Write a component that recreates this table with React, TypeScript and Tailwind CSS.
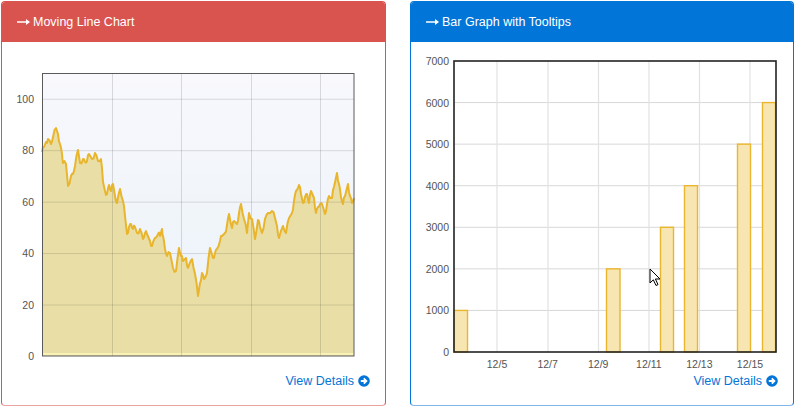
import React from "react";

// traced points of the moving line, in page pixels
const trace: [number, number][] = [
  [42, 151], [44, 146], [46, 141], [48, 138], [51, 143], [53, 136], [56, 127], [58, 133], [60, 143], [62, 153],
  [63, 162], [66, 163], [68, 185], [71, 175], [73, 173], [75, 165], [78, 149], [80, 162], [83, 158], [85, 161],
  [87, 160], [89, 153], [92, 158], [95, 152], [98, 160], [101, 158], [103, 181], [105, 190], [107, 193], [109, 184],
  [111, 190], [113, 183], [115, 195], [117, 202], [120, 188], [123, 200], [125, 215], [127, 233], [129, 226], [131, 223],
  [133, 228], [135, 226], [137, 232], [140, 228], [143, 238], [145, 232], [147, 233], [150, 240], [152, 245], [155, 237],
  [158, 233], [160, 235], [162, 228], [163, 235], [165, 248], [167, 255], [170, 252], [173, 267], [176, 270], [179, 247],
  [181, 255], [183, 260], [186, 257], [188, 267], [192, 258], [195, 273], [198, 295], [200, 282], [202, 272], [204, 278],
  [207, 272], [210, 247], [213, 257], [215, 252], [217, 248], [220, 240], [222, 235], [225, 232], [227, 224], [229, 213],
  [232, 227], [234, 220], [237, 223], [239, 212], [241, 203], [244, 218], [247, 232], [249, 212], [252, 218], [255, 238],
  [258, 219], [260, 226], [262, 232], [265, 218], [268, 212], [272, 210], [275, 217], [277, 225], [279, 237], [283, 225],
  [286, 232], [289, 217], [292, 212], [294, 200], [296, 190], [299, 184], [301, 193], [303, 202], [305, 196], [307, 193],
  [309, 202], [311, 190], [314, 197], [316, 212], [318, 206], [320, 203], [323, 206], [325, 213], [327, 203], [329, 195],
  [332, 197], [334, 186], [337, 172], [339, 183], [341, 196], [343, 203], [345, 195], [348, 183], [350, 195], [352, 202],
  [354, 197],
];

const linePoints = () => {
  const out: [number, number][] = [];
  trace.forEach((p, i) => {
    out.push(p);
    const n = trace[i + 1];
    if (n) {
      const off = (((i * 7) % 5) - 2) * 1.2;
      out.push([(p[0] + n[0]) / 2, (p[1] + n[1]) / 2 + off]);
    }
  });
  return out;
};

const LongArrow = () => (
  <svg width="13" height="8" viewBox="0 0 13 8" className="shrink-0">
    <path d="M0 4h10" stroke="white" strokeWidth="1.6" />
    <polygon points="9,1 13,4 9,7" fill="white" />
  </svg>
);

const CircleArrow = () => (
  <svg width="12" height="12" viewBox="0 0 12 12" className="shrink-0">
    <circle cx="6" cy="6" r="5.8" fill="#0275d8" />
    <path d="M2.8 6h5.4M5.8 3.4L8.4 6L5.8 8.6" stroke="white" strokeWidth="1.8" fill="none" />
  </svg>
);

const LineChart = () => {
  const pts = linePoints();
  const ys = (v: number) => 355 - v * 2.5727;
  const poly = pts.map((p) => p.join(",")).join(" ");
  return (
    <svg width="383" height="329" viewBox="2 41 383 329">
      <defs>
        <linearGradient id="lcbg" x1="0" y1="0" x2="0" y2="1">
          <stop offset="0" stopColor="#f8f8fd" />
          <stop offset="1" stopColor="#e9f2f8" />
        </linearGradient>
      </defs>
      <rect x="42" y="72" width="312" height="283" fill="url(#lcbg)" />
      <polygon points={`${poly} 354,355 42,355`} fill="#e9dfa6" />
      <line x1="42" y1="353" x2="354" y2="353" stroke="#f8f2b6" strokeWidth="2" />
      {[20, 40, 60, 80, 100].map((v) => (
        <line key={v} x1="42" x2="354" y1={ys(v) + 0.5} y2={ys(v) + 0.5} stroke="rgba(0,0,0,0.13)" />
      ))}
      {[112.5, 181.5, 251.5, 320.5].map((x) => (
        <line key={x} x1={x} x2={x} y1="72" y2="355" stroke="rgba(0,0,0,0.13)" />
      ))}
      <polyline points={poly} fill="none" stroke="#e8b52d" strokeWidth="2" strokeLinejoin="round" />
      <rect x="42.5" y="72.5" width="311.5" height="282.5" fill="none" stroke="#5a5a5a" />
      {[0, 20, 40, 60, 80, 100].map((v) => (
        <text key={v} x="34" y={ys(v) + 4} textAnchor="end" fontSize="10.5" fill="#545454">
          {v}
        </text>
      ))}
    </svg>
  );
};

const bars = [
  { x: 454, w: 13.5, v: 1000 },
  { x: 606.5, w: 13.5, v: 2000 },
  { x: 660.5, w: 13, v: 3000 },
  { x: 684.5, w: 13, v: 4000 },
  { x: 737.5, w: 13, v: 5000 },
  { x: 762.5, w: 13, v: 6000 },
];

const BarChart = () => {
  const ys = (v: number) => 351 - v * 0.041571;
  return (
    <svg width="382" height="329" viewBox="411 41 382 329">
      {[1000, 2000, 3000, 4000, 5000, 6000].map((v) => (
        <line key={v} x1="454" x2="776" y1={ys(v)} y2={ys(v)} stroke="#d8d8d8" />
      ))}
      {[497, 548, 598.5, 649, 699.5, 750].map((x) => (
        <line key={x} x1={x} x2={x} y1="60" y2="351" stroke="#e2e2e2" strokeWidth="1.2" />
      ))}
      {bars.map((b) => (
        <rect
          key={b.x}
          x={b.x}
          y={ys(b.v)}
          width={b.w}
          height={351 - ys(b.v)}
          fill="#f8e6b2"
          stroke="#eab62e"
          strokeWidth="1.4"
        />
      ))}
      <rect x="454" y="60" width="322" height="291" fill="none" stroke="#222" strokeWidth="1.6" />
      {[0, 1000, 2000, 3000, 4000, 5000, 6000, 7000].map((v) => (
        <text key={v} x="449" y={ys(v) + 4} textAnchor="end" fontSize="10.5" fill="#545454">
          {v}
        </text>
      ))}
      {["12/5", "12/7", "12/9", "12/11", "12/13", "12/15"].map((t, i) => (
        <text key={t} x={497 + i * 50.6} y="367" textAnchor="middle" fontSize="10.5" fill="#545454">
          {t}
        </text>
      ))}
      <path
        d="M650 268 L650 282 L653.3 278.8 L656 284.5 L658 283.6 L655.4 278 L660 278 Z"
        fill="white"
        stroke="black"
        strokeWidth="1"
        strokeLinejoin="round"
      />
    </svg>
  );
};

const Panel = ({ title, tone, children }) => {
  const red = tone === "red";
  return (
    <div
      className={`flex flex-col h-[405px] rounded-[4px] border overflow-hidden ${
        red ? "w-[385px] border-[#d9534f] border-b-[#eba3a1]" : "w-[384px] border-[#0275d8] border-b-[#80b6ea]"
      }`}
    >
      <div
        className={`h-[40px] shrink-0 flex items-center gap-[3px] pl-[15px] text-white text-[12.5px] ${
          red ? "bg-[#d9534f]" : "bg-[#0275d8]"
        }`}
      >
        <LongArrow />
        <span>{title}</span>
      </div>
      {children}
      <div className="flex justify-end items-center h-[20px] pr-[15px]">
        <a className="flex items-center gap-[4px] text-[12.5px] text-[#0275d8]">
          View Details
          <CircleArrow />
        </a>
      </div>
    </div>
  );
};

export default function App() {
  return (
    <div className="w-[800px] h-[408px] bg-white flex gap-[24px] pl-[1px] pt-[1px] font-['Liberation_Sans',Arial,sans-serif]">
      <Panel title="Moving Line Chart" tone="red">
        <LineChart />
      </Panel>
      <Panel title="Bar Graph with Tooltips" tone="blue">
        <BarChart />
      </Panel>
    </div>
  );
}
